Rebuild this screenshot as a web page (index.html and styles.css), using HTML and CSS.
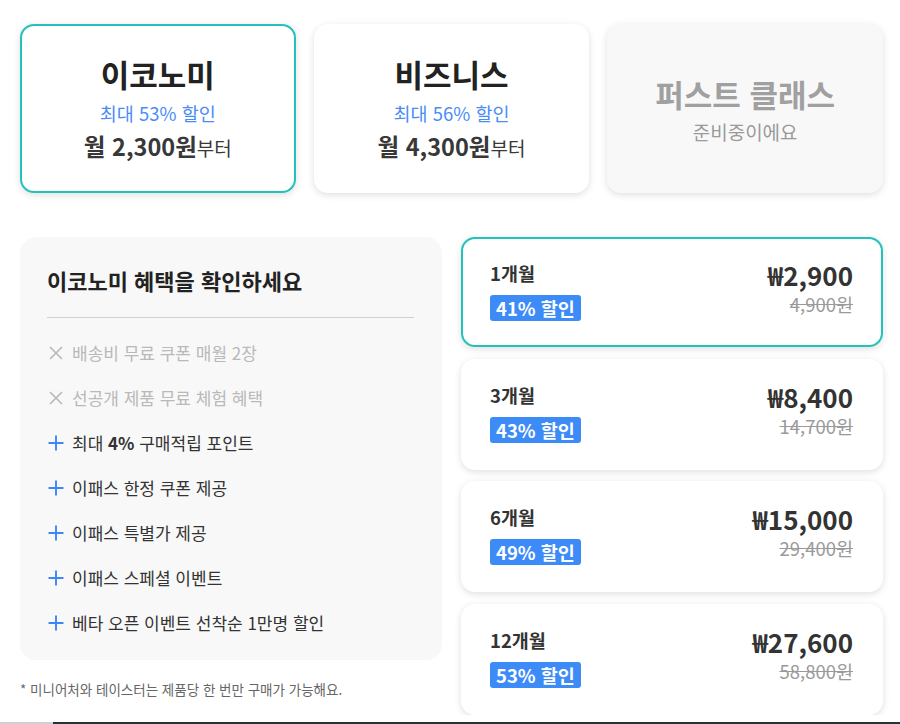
FILE: index.html
```html
<!DOCTYPE html>
<html lang="ko">
<head>
<meta charset="utf-8">
<title>멤버십</title>
<link rel="stylesheet" href="styles.css">
</head>
<body>
<div class="page">
  <div class="tiers">
    <div class="tier selected">
      <div class="tier-title">이코노미</div>
      <div class="tier-sub">최대 53% 할인</div>
      <div class="tier-price">월 2,300원<span class="from">부터</span></div>
    </div>
    <div class="tier">
      <div class="tier-title">비즈니스</div>
      <div class="tier-sub">최대 56% 할인</div>
      <div class="tier-price">월 4,300원<span class="from">부터</span></div>
    </div>
    <div class="tier disabled">
      <div class="tier-title">퍼스트 클래스</div>
      <div class="tier-sub">준비중이에요</div>
    </div>
  </div>

  <div class="bottom">
    <div class="left">
      <div class="benefits">
        <div class="benefits-title">이코노미 혜택을 확인하세요</div>
        <div class="divider"></div>
        <ul class="list">
          <li class="item off"><svg class="ico" viewBox="0 0 16 16"><path d="M2 2L14 14M14 2L2 14" stroke="#b8b8b8" stroke-width="1.6" fill="none"/></svg><span>배송비 무료 쿠폰 매월 2장</span></li>
          <li class="item off"><svg class="ico" viewBox="0 0 16 16"><path d="M2 2L14 14M14 2L2 14" stroke="#b8b8b8" stroke-width="1.6" fill="none"/></svg><span>선공개 제품 무료 체험 혜택</span></li>
          <li class="item"><svg class="ico" viewBox="0 0 16 16"><path d="M8 0.5V15.5M0.5 8H15.5" stroke="#3d86f5" stroke-width="1.9" fill="none"/></svg><span>최대 <b>4%</b> 구매적립 포인트</span></li>
          <li class="item"><svg class="ico" viewBox="0 0 16 16"><path d="M8 0.5V15.5M0.5 8H15.5" stroke="#3d86f5" stroke-width="1.9" fill="none"/></svg><span>이패스 한정 쿠폰 제공</span></li>
          <li class="item"><svg class="ico" viewBox="0 0 16 16"><path d="M8 0.5V15.5M0.5 8H15.5" stroke="#3d86f5" stroke-width="1.9" fill="none"/></svg><span>이패스 특별가 제공</span></li>
          <li class="item"><svg class="ico" viewBox="0 0 16 16"><path d="M8 0.5V15.5M0.5 8H15.5" stroke="#3d86f5" stroke-width="1.9" fill="none"/></svg><span>이패스 스페셜 이벤트</span></li>
          <li class="item"><svg class="ico" viewBox="0 0 16 16"><path d="M8 0.5V15.5M0.5 8H15.5" stroke="#3d86f5" stroke-width="1.9" fill="none"/></svg><span>베타 오픈 이벤트 선착순 1만명 할인</span></li>
        </ul>
      </div>
      <p class="note">* 미니어처와 테이스터는 제품당 한 번만 구매가 가능해요.</p>
    </div>

    <div class="plans">
      <div class="plan selected">
        <div class="plan-left">
          <div class="months">1개월</div>
          <div class="badge">41% 할인</div>
        </div>
        <div class="plan-right">
          <div class="price">₩2,900</div>
          <div class="orig">4,900원</div>
        </div>
      </div>
      <div class="plan">
        <div class="plan-left">
          <div class="months">3개월</div>
          <div class="badge">43% 할인</div>
        </div>
        <div class="plan-right">
          <div class="price">₩8,400</div>
          <div class="orig">14,700원</div>
        </div>
      </div>
      <div class="plan">
        <div class="plan-left">
          <div class="months">6개월</div>
          <div class="badge">49% 할인</div>
        </div>
        <div class="plan-right">
          <div class="price">₩15,000</div>
          <div class="orig">29,400원</div>
        </div>
      </div>
      <div class="plan">
        <div class="plan-left">
          <div class="months">12개월</div>
          <div class="badge">53% 할인</div>
        </div>
        <div class="plan-right">
          <div class="price">₩27,600</div>
          <div class="orig">58,800원</div>
        </div>
      </div>
    </div>
  </div>
</div>
<div class="scrollbar"><div class="thumb"></div></div>
</body>
</html>
```

FILE: styles.css
```css
* { box-sizing: border-box; }
html, body { margin: 0; padding: 0; background: #fff; }
body {
  font-family: "Noto Sans CJK KR", "Noto Sans", sans-serif;
  color: #333;
  overflow: hidden;
}
.page {
  width: 863px;
  margin-left: 20px;
  padding-top: 24px;
}
.tiers {
  display: grid;
  grid-template-columns: repeat(3, 1fr);
  gap: 18px;
}
.tier {
  height: 169px;
  border-radius: 14px;
  background: #fff;
  border: 2px solid transparent;
  box-shadow: 0 2px 7px rgba(0,0,0,0.13);
  display: flex;
  flex-direction: column;
  align-items: center;
  justify-content: center;
  padding-bottom: 2px;
}
.tier.selected { border-color: #22c2bb; }
.tier-title {
  font-size: 31px;
  font-weight: 700;
  line-height: 42px;
  color: #222;
}
.tier-sub {
  font-size: 18.5px;
  line-height: 36px;
  color: #4a8cf7;
}
.tier-price {
  font-size: 23.5px;
  font-weight: 700;
  line-height: 30px;
  color: #383838;
}
.from { font-size: 19px; font-weight: 400; }
.tier.disabled { background: #f8f8f8; padding-bottom: 0; padding-top: 4px; }
.tier.disabled .tier-title { color: #a0a0a0; }
.tier.disabled .tier-sub { color: #9a9a9a; line-height: 34px; font-size: 19px; }

.bottom {
  display: grid;
  grid-template-columns: 422px 422px;
  gap: 19px;
  margin-top: 44px;
}
.benefits {
  background: #f8f8f8;
  border-radius: 16px;
  padding: 27px 28px 13px 27px;
  height: 423px;
}
.benefits-title {
  font-size: 22px;
  font-weight: 700;
  line-height: 32px;
  color: #222;
}
.divider {
  height: 1px;
  background: #cfcfcf;
  margin-top: 21px;
}
.list {
  list-style: none;
  margin: 12px 0 0;
  padding: 0;
}
.item {
  display: flex;
  align-items: center;
  height: 45px;
  font-size: 17px;
  color: #333;
}
.item b { font-weight: 700; }
.item.off { color: #b9b9b9; }
.ico {
  width: 16px;
  height: 16px;
  margin: 0 8px 0 1px;
  flex: none;
}
.note {
  margin: 19px 0 0;
  font-size: 13.5px;
  line-height: 20px;
  color: #666;
}

.plans {
  display: flex;
  flex-direction: column;
  gap: 11.5px;
}
.plan {
  height: 111px;
  background: #fff;
  border-radius: 14px;
  border: 2px solid transparent;
  box-shadow: 0 2px 7px rgba(0,0,0,0.13);
  display: flex;
  justify-content: space-between;
  align-items: flex-start;
  padding: 19px 28px 0 27px;
}
.plan.selected { border-color: #22c2bb; height: 110px; }
.months {
  font-size: 18.5px;
  font-weight: 700;
  line-height: 30px;
  color: #333;
}
.badge {
  display: inline-block;
  margin-top: 7px;
  height: 26px;
  line-height: 26px;
  padding: 0 6px;
  background: #3d8bf7;
  color: #fff;
  font-size: 18.5px;
  font-weight: 700;
  border-radius: 3px;
}
.plan-right { text-align: right; }
.price {
  font-size: 26px;
  font-weight: 700;
  line-height: 34px;
  color: #333;
}
.orig {
  font-size: 18.5px;
  line-height: 24px;
  color: #9a9a9a;
  text-decoration: line-through;
}
.scrollbar {
  position: fixed;
  left: 0;
  right: 0;
  bottom: 0;
  height: 2px;
  background: #263238;
}
.thumb {
  width: 53px;
  height: 2px;
  background: #d0d0d0;
}
```
